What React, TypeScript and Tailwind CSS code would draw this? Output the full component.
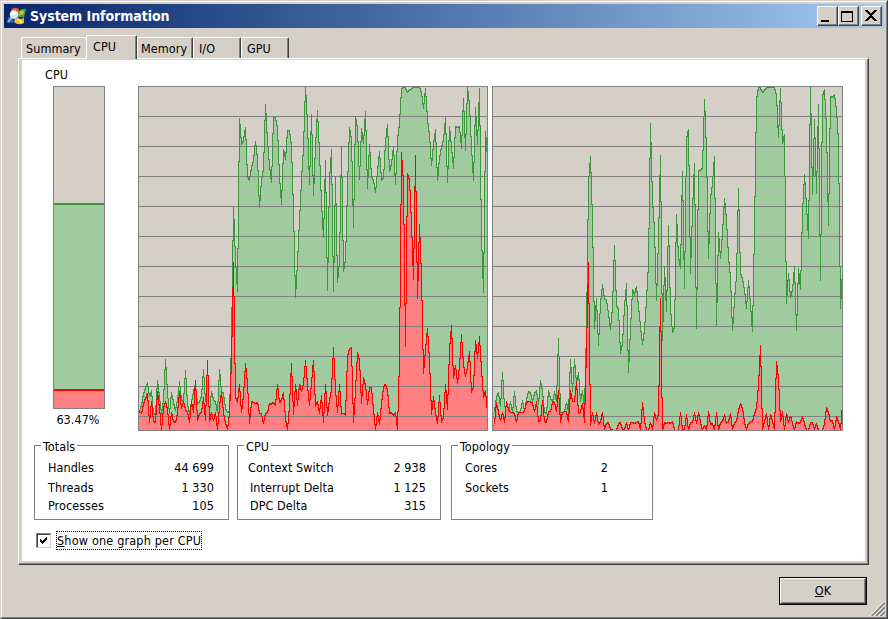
import React from "react";

// Samples are taken every two pixels. Values are thirds of a pixel below LEVEL_ZERO.
const LEVEL_ZERO = 164;

const CPU0_TOTAL = [
  485, 465, 432, 415, 398, 440, 422, 493, 490, 392, 440, 493, 450, 328, 430, 490, 428, 457, 480, 450, 395, 450, 455, 362, 460,
  492, 455, 425, 402, 463, 455, 440, 358, 455, 440, 487, 425, 450, 457, 488, 358, 425, 430, 475, 487, 485, 274, -130, 28, 125,
  -395, -317, -330, -368, -220, -210, -248, -268, -327, -275, -128, -210, -245, -438, -325, -255, -203, -398, -398, -366, -220,
  -136, -302, -272, -360, -360, -310, -120, 142, 35, -90, -210, -310, -490, -380, -197, -407, -163, -310, -419, -290, -140, -37,
  -270, 120, -210, -302, 125, -220, 97, 35, -310, 65, 30, -190, -368, -330, -67, -400, -365, -211, -365, -320, -416, -184, -317,
  -220, -210, -172, -235, -297, -210, -215, -325, -377, -235, -260, -311, -196, -330, -380, -482, -488, -486, -473, -480, -484,
  -490, -488, -490, -488, -472, -425, -485, -392, -345, -253, -318, -361, -208, -275, -310, -330, -398, -202, -370, -310, -245,
  -370, -368, -370, -305, -455, -299, -488, -435, -310, -208, -428, -317, -485, -41, 128, -357, -277,
];

const CPU0_KERNEL = [
  485, 490, 463, 445, 430, 517, 455, 515, 517, 425, 475, 538, 475, 455, 478, 538, 487, 515, 517, 490, 425, 475, 455, 480, 487,
  517, 455, 487, 392, 512, 490, 487, 442, 512, 332, 515, 487, 512, 487, 538, 470, 425, 490, 520, 538, 490, 332, 38, 440, 457,
  403, 487, 435, 340, 400, 520, 455, 458, 460, 457, 488, 492, 520, 490, 487, 460, 463, 457, 465, 403, 458, 450, 428, 505, 538,
  465, 340, 493, 402, 465, 402, 425, 400, 332, 405, 465, 400, 330, 468, 455, 490, 437, 517, 402, 495, 450, 418, 293, 420, 487,
  403, 492, 490, 495, 320, 297, 293, 517, 420, 308, 330, 460, 383, 405, 463, 413, 412, 480, 538, 487, 523, 460, 412, 402, 420,
  490, 487, 495, 487, 538, 327, -293, -200, 290, -230, -210, -80, 88, -284, 146, -77, 80, 370, 300, 235, 330, 493, 440, 487,
  520, 437, 517, 500, 403, 478, 300, 226, 385, 346, 400, 350, 253, 345, 378, 350, 305, 427, 410, 270, 325, 260, 360, 442, 422,
  490,
];

const CPU1_TOTAL = [
  485, 440, 428, 470, 367, 470, 470, 485, 455, 487, 425, 485, 487, 485, 452, 485, 450, 425, 427, 455, 430, 422, 463, 392, 425,
  487, 490, 422, 445, 455, 425, 455, 265, 487, 490, 485, 457, 487, 328, 425, 328, 400, 367, 455, 422, 475, 236, -200, -281, -89,
  235, 145, 286, 160, 103, 148, 150, 190, 238, 170, -14, 165, 180, 310, 280, 170, 100, 367, 235, 118, 135, 110, 170, 230, 283,
  240, 150, 40, -380, -149, -60, 152, -35, -285, 270, 50, 185, -75, 175, 247, 232, -107, 20, 55, -237, 115, -332, -362, 70, -118,
  -261, 236, -240, -240, -248, -453, -298, 26, -155, -200, -282, 227, -54, 25, -50, -155, -90, 20, 85, 242, 150, 77, -185, 70,
  85, 120, 175, 90, 165, 245, -64, -450, -490, -485, -472, -480, -485, -490, -488, -490, -488, -465, -337, -485, -320, -347,
  160, 70, 142, 120, 50, 242, 55, 118, -110, -227, -130, -35, -490, -166, -392, -169, -438, 90, -462, -482, -365, -73, -460,
  -458, -467, -420, -325, 175, 60,
];

const CPU1_KERNEL = [
  520, 458, 487, 510, 487, 517, 455, 480, 487, 487, 490, 517, 487, 487, 487, 483, 457, 455, 455, 460, 485, 455, 515, 510, 452,
  515, 517, 485, 485, 455, 457, 485, 422, 517, 487, 485, 485, 515, 422, 455, 455, 393, 490, 485, 460, 517, 299, 38, 525, 487,
  520, 487, 522, 515, 487, 538, 520, 517, 538, 540, 540, 540, 520, 517, 537, 538, 517, 540, 517, 518, 520, 517, 515, 540, 457,
  515, 540, 540, 517, 538, 487, 510, 492, 145, 540, 517, 520, 517, 520, 515, 540, 540, 540, 487, 538, 538, 493, 540, 517, 518,
  488, 520, 487, 517, 540, 527, 540, 485, 523, 520, 540, 487, 540, 518, 515, 493, 520, 515, 490, 538, 520, 512, 480, 460, 475,
  517, 538, 520, 516, 515, 490, 475, 405, 286, 540, 515, 490, 540, 492, 515, 540, 333, 385, 515, 485, 540, 490, 517, 498, 520,
  540, 515, 520, 517, 500, 520, 540, 540, 517, 517, 538, 520, 540, 540, 540, 520, 472, 487, 515, 512, 540, 500, 515, 540, 460,
];

const HEIGHT = 345;
const GRID = Array.from({ length: 11 }, (_, i) => 30 * (i + 1));

function trace(values: number[], start: number) {
  let line = "";
  let area = "";
  const column = (x: number, levels: number[]) => {
    const ys = levels.map((v) => Math.max(1, Math.min(HEIGHT - 1, LEVEL_ZERO + Math.floor(v / 3))));
    const top = Math.min(...ys);
    const bottom = Math.max(...ys) + 1;
    line += `M${x} ${top}h1V${bottom}h-1z`;
    area += `M${x} ${top}h1V${HEIGHT}h-1z`;
  };
  column(start - 1, [values[0] + 6]);
  values.forEach((v, i) => {
    const prev = values[i - 1] ?? v;
    const next = values[i + 1] ?? v;
    const x = start + i * 2;
    column(x, [v, v + (prev - v) / 4, v + (next - v) / 4]);
    if (i < values.length - 1) column(x + 1, [v * 0.75 + next * 0.25, v * 0.25 + next * 0.75]);
  });
  return { line, area };
}

function Graph({ id, total, kernel, start, className, width }: {
  id: string; total: number[]; kernel: number[]; start: number; className: string; width: number;
}) {
  const t = trace(total, start);
  const k = trace(kernel, start);
  const rows = GRID.map((y) => <rect key={y} x={0} y={y} width={width} height={1} />);
  return (
    <svg className={`block shrink-0 bg-[#d4d0c8] ${className}`} viewBox={`0 0 ${width} ${HEIGHT}`} shapeRendering="crispEdges">
      <clipPath id={id}>{rows}</clipPath>
      <path d={t.area} fill="#9fcb9f" />
      <g fill="#808080">{rows}</g>
      <path d={t.line} fill="#3c963c" />
      <path d={k.area} fill="#ff8080" />
      <path d={k.area} fill="#808080" clipPath={`url(#${id})`} />
      <path d={k.line} fill="#ff0000" />
      <rect x={0.5} y={0.5} width={width - 1} height={HEIGHT - 1} fill="none" stroke="#808080" />
    </svg>
  );
}

const raised = "bg-[#d4d0c8] border border-t-white border-l-white border-r-[#404040] border-b-[#404040] shadow-[inset_-1px_-1px_0_#808080]";

function Tab({ label, className }: { label: string; className: string }) {
  return (
    <div className={`h-[21px] shrink-0 rounded-t-[2px] border-t border-white bg-[#d4d0c8] pt-[3px] leading-[16px] ${className}`}>
      {label}
    </div>
  );
}

const tabEdge = "border-l border-r border-r-[#404040] shadow-[inset_-1px_0_0_#808080]";

function Group({ title, rows, className, valueClass }: {
  title: string; rows: { name: string; value: string; className: string }[]; className: string; valueClass: string;
}) {
  return (
    <div className={`relative h-[75px] shrink-0 border border-[#808080] pt-[14px] ${className}`}>
      <span className="absolute -top-[7px] left-[6px] bg-white px-[2px] leading-[16px]">{title}</span>
      {rows.map((r) => (
        <div key={r.name} className={`flex justify-between leading-[16px] ${r.className}`}>
          <span>{r.name}</span>
          <span className={valueClass}>{r.value}</span>
        </div>
      ))}
    </div>
  );
}

function AppIcon() {
  return (
    <svg className="h-[18px] w-[20px] shrink-0" viewBox="0 0 20 18">
      <path d="M4 3Q7-1 12 2V9H3z" fill="#e2592a" />
      <path d="M12 4Q15 1 19 2L17 11Q14 9 11 11z" fill="#4f9f2c" />
      <path d="M13 4Q16 3 17 4L16 8Q14 7 12 9z" fill="#a1d455" />
      <path d="M1 10H7L6 16Q3 15 0 16z" fill="#2868ba" />
      <path d="M8 11Q12 13 17 11L17 16Q11 19 7 15z" fill="#edbd1c" />
      <path d="M10 11L15 16" stroke="#fff0a0" strokeWidth="1.5" />
      <path d="M5 10L1 15" stroke="#a1adbd" strokeWidth="2" />
      <circle cx="7" cy="7.5" r="3.7" fill="#c9f0ff" stroke="#e4ecff" strokeWidth="1.2" />
      <path d="M5 8Q6 5 9 6" stroke="white" fill="none" strokeWidth="2" />
    </svg>
  );
}

export default function App() {
  return (
    <div className="h-[619px] w-[888px] overflow-hidden border border-t-[#d4d0c8] border-l-[#d4d0c8] border-r-[#404040] border-b-[#404040] bg-[#d4d0c8] font-['DejaVu_Sans_Condensed','DejaVu_Sans',sans-serif] text-[12.5px] tracking-[0.06px] text-black [font-stretch:condensed]">
      <div className="relative flex h-[617px] w-[886px] flex-col border border-t-white border-l-white border-r-[#808080] border-b-[#808080] p-[2px]">
        <header className="flex h-[24px] w-[880px] shrink-0 items-center bg-linear-to-r from-[#0a246a] to-[#a6caf0] pl-[3px] pr-[2px]">
          <AppIcon />
          <h1 className="ml-[3px] grow text-[14px] leading-[24px] font-bold tracking-[-0.05px] text-white">System Information</h1>
          <button className={`h-[20px] w-[21px] ${raised}`}>
            <svg viewBox="0 0 19 18" className="block h-[18px] w-[19px]" shapeRendering="crispEdges"><path d="M3 13h8v2H3z" /></svg>
          </button>
          <button className={`h-[20px] w-[21px] ${raised}`}>
            <svg viewBox="0 0 19 18" className="block h-[18px] w-[19px]" shapeRendering="crispEdges"><path fillRule="evenodd" d="M2 4h12v11H2zM3 6v8h10V6z" /></svg>
          </button>
          <button className={`ml-[2px] h-[20px] w-[21px] ${raised}`}>
            <svg viewBox="0 0 19 18" className="block h-[18px] w-[19px]" shapeRendering="crispEdges">
              <path d="M3 3h3v1h1v1h1v1h2V5h1V4h1V3h3v1h-1v1h-1v1h-1v1h-1v1h-1v1h1v1h1v1h1v1h1v1h1v1h-3v-1h-1v-1h-1v-1H8v1H7v1H6v1H3v-1h1v-1h1v-1h1v-1h1V9h1V8H7V7H6V6H5V5H4V4H3z" />
            </svg>
          </button>
        </header>

        <nav className="relative z-10 ml-[17px] mt-[7px] flex h-[23px] shrink-0 items-end">
          <Tab label="Summary" className="w-[65px] border-l pl-[4px]" />
          <div className={`-mb-px h-[24px] w-[51px] rounded-t-[2px] border-t border-white bg-[#d4d0c8] pl-[6px] pt-[3px] leading-[16px] ${tabEdge}`}>CPU</div>
          <Tab label="Memory" className={`w-[56px] pl-[3px] ${tabEdge}`} />
          <Tab label="I/O" className={`w-[48px] pl-[5px] ${tabEdge}`} />
          <Tab label="GPU" className={`w-[48px] pl-[5px] ${tabEdge}`} />
        </nav>

        <div className={`ml-[14px] h-[507px] w-[851px] shrink-0 pt-px pr-[3px] pb-[3px] pl-[3px] ${raised}`}>
          <main className="h-[501px] w-[843px] bg-white">
            <div className="flex h-[373px]">
              <section className="w-[116px] shrink-0 pl-[23px] pt-[7px]">
                <div className="h-[16px] leading-[16px]">CPU</div>
                <div className="ml-[8px] mt-[3px] flex h-[323px] w-[52px] flex-col border border-[#808080] bg-[#d4d0c8]">
                  <div className="h-[116px]" />
                  <div className="h-[186px] border-t-2 border-[#3c963c] bg-[#9fcb9f]" />
                  <div className="grow border-t-2 border-[#ff0000] bg-[#ff8080]" />
                </div>
                <div className="ml-[8px] mt-[3px] w-[50px] text-center leading-[16px]">63.47%</div>
              </section>
              <div className="flex gap-[4px] pt-[26px]">
                <Graph id="grid-cpu0" total={CPU0_TOTAL} kernel={CPU0_KERNEL} start={1} width={350} className="h-[345px] w-[350px]" />
                <Graph id="grid-cpu1" total={CPU1_TOTAL} kernel={CPU1_KERNEL} start={2} width={351} className="h-[345px] w-[351px]" />
              </div>
            </div>
            <div className="ml-[12px] mt-[12px] flex">
              <Group title="Totals" className="w-[195px]" valueClass="mr-[14px]" rows={[
                { name: "Handles", value: "44 699", className: "pl-[13px]" },
                { name: "Threads", value: "1 330", className: "mt-[4px] pl-[13px]" },
                { name: "Processes", value: "105", className: "mt-[2px] pl-[13px]" },
              ]} />
              <Group title="CPU" className="ml-[8px] w-[204px]" valueClass="mr-[14px]" rows={[
                { name: "Context Switch", value: "2 938", className: "pl-[10px]" },
                { name: "Interrupt Delta", value: "1 125", className: "mt-[4px] pl-[12px]" },
                { name: "DPC Delta", value: "315", className: "mt-[2px] pl-[12px]" },
              ]} />
              <Group title="Topology" className="ml-[10px] w-[202px]" valueClass="mr-[44px]" rows={[
                { name: "Cores", value: "2", className: "pl-[13px]" },
                { name: "Sockets", value: "1", className: "mt-[4px] pl-[13px]" },
              ]} />
            </div>
            <label className="ml-[14px] mt-[11px] flex h-[19px] items-center">
              <span className="flex h-[15px] w-[15px] items-center justify-center border border-t-[#808080] border-l-[#808080] border-r-[#d4d0c8] border-b-[#d4d0c8] bg-white shadow-[inset_1px_1px_0_#404040]">
                <svg viewBox="0 0 7 7" className="h-[7px] w-[7px]" shapeRendering="crispEdges">
                  <path d="M0 2h1v1h1v1h1V3h1V2h1V1h1V0h1v3H6v1H5v1H4v1H3v1H2V6H1V5H0z" />
                </svg>
              </span>
              <span className="ml-[5px] h-[19px] w-[146px] border border-dotted border-black pt-px leading-[16px] tracking-[0.19px] whitespace-nowrap"><u>S</u>how one graph per CPU</span>
            </label>
          </main>
        </div>

        <button className="mt-[12px] mr-[17px] h-[28px] w-[88px] shrink-0 self-end border border-black">
          <span className={`flex h-[26px] w-[86px] items-center justify-center ${raised}`}><span><u>O</u>K</span></span>
        </button>
        <svg className="absolute right-[1px] bottom-[1px] h-[16px] w-[16px]" viewBox="0 0 16 16">
          <path d="M1 16L16 1M5.5 16L16 5.5M10 16L16 10" stroke="white" />
          <path d="M2.5 16L16 2.5M7 16L16 7M11.5 16L16 11.5" stroke="#808080" strokeWidth="1.6" />
        </svg>
      </div>
    </div>
  );
}
